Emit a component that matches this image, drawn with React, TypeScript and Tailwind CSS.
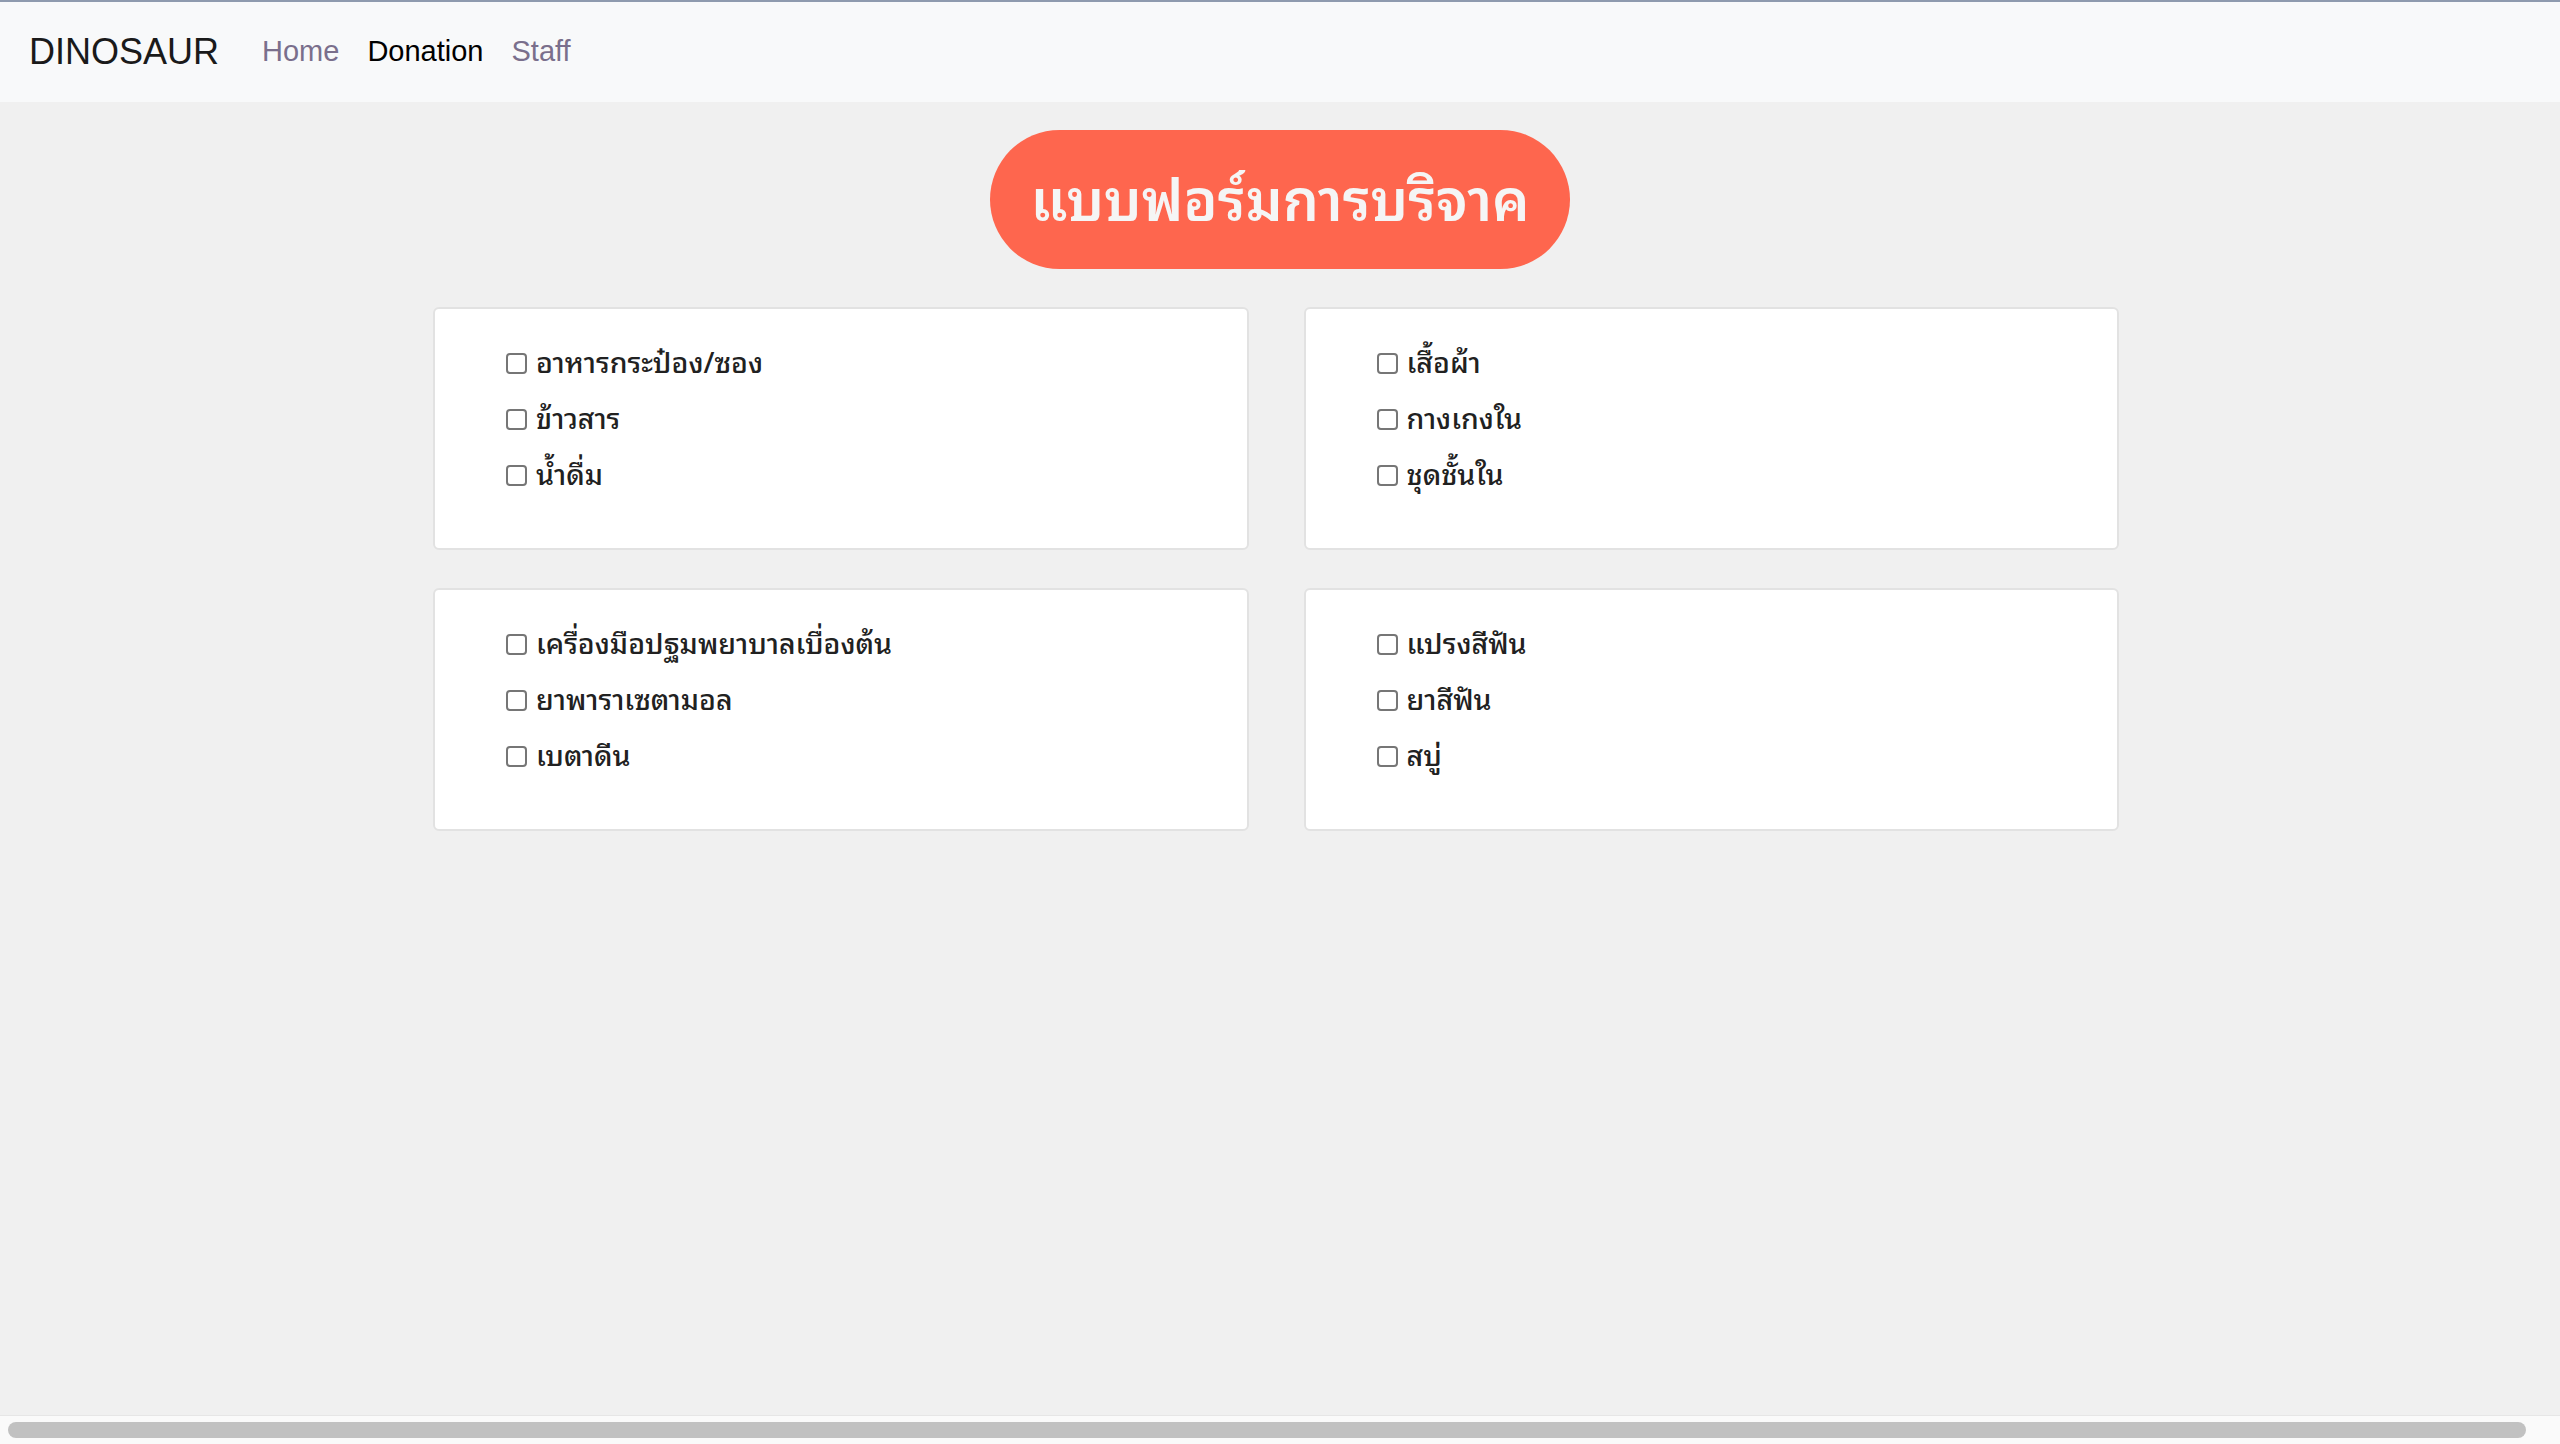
const groups = [
  ["อาหารกระป๋อง/ซอง", "ข้าวสาร", "น้ำดื่ม"],
  ["เสื้อผ้า", "กางเกงใน", "ชุดชั้นใน"],
  ["เครื่องมือปฐมพยาบาลเบื่องต้น", "ยาพาราเซตามอล", "เบตาดีน"],
  ["แปรงสีฟัน", "ยาสีฟัน", "สบู่"],
];

const thai = "font-['Thonburi','Noto_Sans_Thai_Looped','Noto_Serif_Thai','Noto_Sans_Thai','Noto_Sans',sans-serif]";

function Item({ label }: { label: string }) {
  return (
    <label className="flex h-[34px] items-center gap-[9px]">
      <span className="h-[21px] w-[21px] shrink-0 rounded-[4px] border-2 border-[#767676] bg-white" />
      <span className={`${thai} pb-[6px] text-[28.5px] font-medium leading-none text-[#212121]`}>{label}</span>
    </label>
  );
}

export default function App() {
  return (
    <div className="flex h-screen flex-col overflow-hidden bg-[#f0f0f0]">
      {/* navbar */}
      <nav className="flex h-[102px] items-center border-t-2 border-[#8e9aae] bg-[#f8f9fa] px-[29px] font-['Liberation_Sans',Arial,sans-serif]">
        <span className="mr-[29px] text-[36px] text-[#1a1a1a]">DINOSAUR</span>
        <a className="px-[14px] text-[29px] text-[#7a6f8c]">Home</a>
        <a className="px-[14px] text-[29px] text-black">Donation</a>
        <a className="px-[14px] text-[29px] text-[#7a6f8c]">Staff</a>
      </nav>

      <main className="flex-1">
        <div className="mt-[28px] flex justify-center">
          <h1
            className={`${thai} flex h-[139px] w-[580px] items-center justify-center rounded-full bg-[#fe664e] pb-[8px] text-[57px] font-semibold text-[#f5f5f5]`}
          >
            แบบฟอร์มการบริจาค
          </h1>
        </div>

        <div className="ml-[433px] mt-[38px] grid w-[1686px] grid-cols-2 gap-x-[55px] gap-y-[38px]">
          {groups.map((g, i) => (
            <div
              key={i}
              className="flex h-[243px] flex-col gap-[22px] rounded-[6px] border-2 border-[#e2e2e2] bg-white pl-[71px] pt-[37px]"
            >
              {g.map((t) => (
                <Item key={t} label={t} />
              ))}
            </div>
          ))}
        </div>
      </main>

      {/* horizontal scrollbar */}
      <div className="flex h-[29px] items-center border-t border-[#e6e6e6] bg-[#fafafa] px-[8px]">
        <div className="h-[16px] w-[2518px] rounded-full bg-[#c1c1c1]" />
      </div>
    </div>
  );
}
